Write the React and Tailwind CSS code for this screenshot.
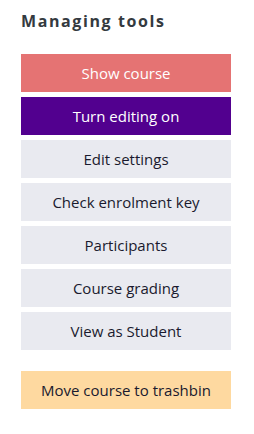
const tools = [
  { label: 'Show course', cls: 'bg-[#e57373] text-white' },
  { label: 'Turn editing on', cls: 'bg-[#52008f] text-white' },
  { label: 'Edit settings', cls: 'bg-[#e9eaf0] text-[#1a1a2e]' },
  { label: 'Check enrolment key', cls: 'bg-[#e9eaf0] text-[#1a1a2e]' },
  { label: 'Participants', cls: 'bg-[#e9eaf0] text-[#1a1a2e]' },
  { label: 'Course grading', cls: 'bg-[#e9eaf0] text-[#1a1a2e]' },
  { label: 'View as Student', cls: 'bg-[#e9eaf0] text-[#1a1a2e]' },
]

export default function App() {
  return (
    <div className="w-[254px] h-[434px] bg-white px-[21px] pt-[10px] font-['Open_Sans',sans-serif]">
      <h2 className="text-[16px] font-bold tracking-[1.6px] text-[#343a40] leading-[22px]">Managing tools</h2>
      <div className="mt-[22px] flex flex-col gap-[5px] w-[210px]">
        {tools.map((t) => (
          <button key={t.label} className={`h-[38px] text-[15px] ${t.cls}`}>
            {t.label}
          </button>
        ))}
      </div>
      <button className="mt-[21px] h-[38px] w-[210px] text-[15px] bg-[#fed9a0] text-[#1a1a2e]">
        Move course to trashbin
      </button>
    </div>
  )
}
